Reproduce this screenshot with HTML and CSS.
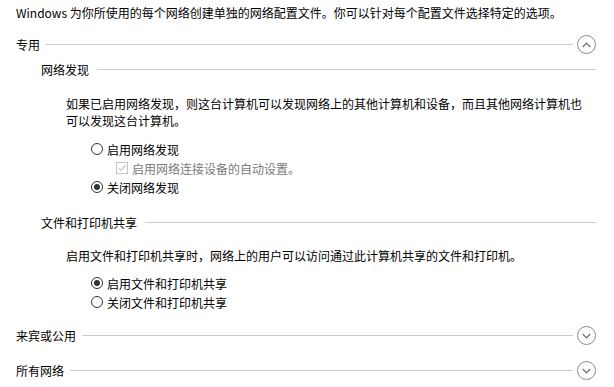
FILE: index.html
```html
<!DOCTYPE html>
<html lang="zh-CN">
<head>
  <meta charset="UTF-8">
  <title>高级共享设置</title>
  <link rel="stylesheet" href="styles.css">
</head>
<body>
  <div class="page">
    <p class="intro">Windows 为你所使用的每个网络创建单独的网络配置文件。你可以针对每个配置文件选择特定的选项。</p>

    <div class="profile-head first">
      <span class="title">专用</span>
      <span class="rule"></span>
      <span class="toggle">
        <svg width="9" height="6" viewBox="0 0 9 6"><path d="M0.8 5 L4.5 1.2 L8.2 5" fill="none" stroke="#6a6a6a" stroke-width="1.2"/></svg>
      </span>
    </div>

    <div class="section">
      <div class="section-head">
        <span class="title">网络发现</span>
        <span class="rule"></span>
      </div>
      <p class="desc">如果已启用网络发现，则这台计算机可以发现网络上的其他计算机和设备，而且其他网络计算机也<br>可以发现这台计算机。</p>
      <div class="options">
        <label class="option"><span class="radio"></span>启用网络发现</label>
        <label class="option sub disabled"><span class="check">
          <svg width="10" height="10" viewBox="0 0 10 10"><path d="M1.5 5.2 L4 7.6 L8.6 2.2" fill="none" stroke="#a8a8a8" stroke-width="1"/></svg>
        </span>启用网络连接设备的自动设置。</label>
        <label class="option"><span class="radio checked"></span>关闭网络发现</label>
      </div>
    </div>

    <div class="section second">
      <div class="section-head">
        <span class="title">文件和打印机共享</span>
        <span class="rule"></span>
      </div>
      <p class="desc">启用文件和打印机共享时，网络上的用户可以访问通过此计算机共享的文件和打印机。</p>
      <div class="options">
        <label class="option"><span class="radio checked"></span>启用文件和打印机共享</label>
        <label class="option"><span class="radio"></span>关闭文件和打印机共享</label>
      </div>
    </div>

    <div class="profile-head">
      <span class="title">来宾或公用</span>
      <span class="rule"></span>
      <span class="toggle">
        <svg width="9" height="6" viewBox="0 0 9 6"><path d="M0.8 1 L4.5 4.8 L8.2 1" fill="none" stroke="#6a6a6a" stroke-width="1.2"/></svg>
      </span>
    </div>

    <div class="profile-head">
      <span class="title">所有网络</span>
      <span class="rule"></span>
      <span class="toggle">
        <svg width="9" height="6" viewBox="0 0 9 6"><path d="M0.8 1 L4.5 4.8 L8.2 1" fill="none" stroke="#6a6a6a" stroke-width="1.2"/></svg>
      </span>
    </div>
  </div>
</body>
</html>
```

FILE: styles.css
```css
body {
  margin: 0;
  background-color: #fff;
  color: #000;
  font-family: "Noto Sans CJK SC", "Noto Sans", sans-serif;
  font-size: 12px;
}

.page {
  padding: 4px 18px 0 16px;
}

.intro {
  margin: 0;
  line-height: 18px;
  white-space: nowrap;
}

.profile-head {
  display: flex;
  align-items: center;
  height: 22px;
  margin-top: 13px;
}

.profile-head.first {
  margin-top: 11.5px;
}

.profile-head .rule {
  margin-left: 6px;
  margin-right: 4px;
}

.rule {
  flex: 1;
  height: 1px;
  background-color: #cbcbcb;
}

.toggle {
  width: 17px;
  height: 17px;
  border: 1px solid #8c8c8c;
  border-radius: 50%;
  display: flex;
  justify-content: center;
  align-items: center;
}

.section {
  margin-left: 25px;
}

.section-head {
  display: flex;
  align-items: center;
  height: 18px;
  margin-top: 5px;
}

.section.second .section-head {
  margin-top: 17px;
}

.section-head .rule {
  margin-left: 8px;
}

.desc {
  margin: 16px 0 0 25px;
  line-height: 17px;
  white-space: nowrap;
}

.section.second .desc {
  margin-top: 15px;
}

.options {
  margin: 11px 0 0 50px;
}

.section.second .options {
  margin-top: 10px;
}

.option {
  display: flex;
  align-items: center;
  height: 19px;
}

.option.sub {
  margin-left: 25px;
}

.option.disabled {
  color: #7a7a7a;
}

.radio {
  width: 10px;
  height: 10px;
  border: 1px solid #333;
  border-radius: 50%;
  margin-right: 4px;
  display: flex;
  justify-content: center;
  align-items: center;
}

.radio.checked::after {
  content: "";
  width: 6px;
  height: 6px;
  border-radius: 50%;
  background-color: #333;
}

.check {
  width: 10px;
  height: 10px;
  border: 1px solid #c4c4c4;
  margin-right: 4px;
  display: flex;
  justify-content: center;
  align-items: center;
}
```
